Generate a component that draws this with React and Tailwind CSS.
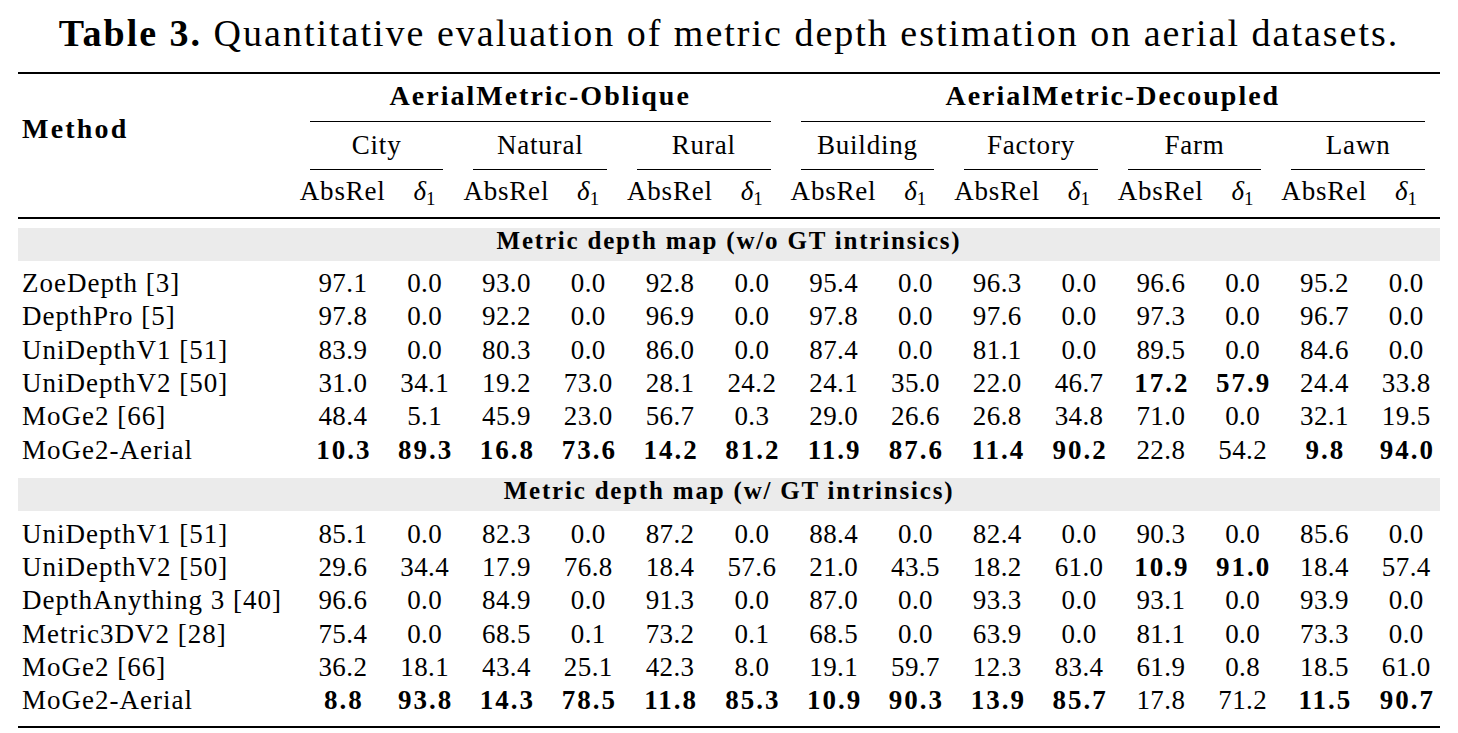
import React from "react";

const GRID = "grid grid-cols-[277px_repeat(7,95.8px_67.8px)]";

const block1 = [
  ["ZoeDepth [3]", "97.1 0.0 93.0 0.0 92.8 0.0 95.4 0.0 96.3 0.0 96.6 0.0 95.2 0.0"],
  ["DepthPro [5]", "97.8 0.0 92.2 0.0 96.9 0.0 97.8 0.0 97.6 0.0 97.3 0.0 96.7 0.0"],
  ["UniDepthV1 [51]", "83.9 0.0 80.3 0.0 86.0 0.0 87.4 0.0 81.1 0.0 89.5 0.0 84.6 0.0"],
  ["UniDepthV2 [50]", "31.0 34.1 19.2 73.0 28.1 24.2 24.1 35.0 22.0 46.7 *17.2 *57.9 24.4 33.8"],
  ["MoGe2 [66]", "48.4 5.1 45.9 23.0 56.7 0.3 29.0 26.6 26.8 34.8 71.0 0.0 32.1 19.5"],
  ["MoGe2-Aerial", "*10.3 *89.3 *16.8 *73.6 *14.2 *81.2 *11.9 *87.6 *11.4 *90.2 22.8 54.2 *9.8 *94.0"],
];

const block2 = [
  ["UniDepthV1 [51]", "85.1 0.0 82.3 0.0 87.2 0.0 88.4 0.0 82.4 0.0 90.3 0.0 85.6 0.0"],
  ["UniDepthV2 [50]", "29.6 34.4 17.9 76.8 18.4 57.6 21.0 43.5 18.2 61.0 *10.9 *91.0 18.4 57.4"],
  ["DepthAnything 3 [40]", "96.6 0.0 84.9 0.0 91.3 0.0 87.0 0.0 93.3 0.0 93.1 0.0 93.9 0.0"],
  ["Metric3DV2 [28]", "75.4 0.0 68.5 0.1 73.2 0.1 68.5 0.0 63.9 0.0 81.1 0.0 73.3 0.0"],
  ["MoGe2 [66]", "36.2 18.1 43.4 25.1 42.3 8.0 19.1 59.7 12.3 83.4 61.9 0.8 18.5 61.0"],
  ["MoGe2-Aerial", "*8.8 *93.8 *14.3 *78.5 *11.8 *85.3 *10.9 *90.3 *13.9 *85.7 17.8 71.2 *11.5 *90.7"],
];

const subsets = ["City", "Natural", "Rural", "Building", "Factory", "Farm", "Lawn"];

function Row({ name, values }) {
  return (
    <div className={`${GRID} h-[33.4px] text-[27px] leading-[33.4px]`}>
      <div className="pl-[4px] tracking-[1px] whitespace-nowrap">{name}</div>
      {values.split(" ").map((v, i) =>
        v.startsWith("*") ? (
          <div key={i} className="text-center font-bold tracking-[2px] pl-[2px]">
            {v.slice(1)}
          </div>
        ) : (
          <div key={i} className="text-center tracking-[0.4px]">
            {v}
          </div>
        )
      )}
    </div>
  );
}

function Band({ label }) {
  return (
    <div className="h-[33.3px] bg-[#ebebeb] pt-[0.5px] text-center font-bold text-[25px] leading-[25px] tracking-[1.8px]">
      {label}
    </div>
  );
}

export default function App() {
  return (
    <div className="w-[1458px] h-[733px] bg-white text-black font-[family-name:'Liberation_Serif',serif] overflow-hidden">
      <div className="pt-[14px] text-center text-[38px] leading-[38px] tracking-[2px] whitespace-nowrap">
        <span className="font-bold">Table 3.</span> Quantitative evaluation of metric depth estimation on aerial datasets.
      </div>
      <div className="ml-[18px] w-[1422px] mt-[20px]">
        <div className="h-[2.4px] bg-black" />
        <div className="flex">
          <div className="w-[277px] pl-[4px] pt-[41px] font-bold text-[28px] leading-[28px] tracking-[2.2px]">
            Method
          </div>
          <div className="w-[1145.2px]">
            <div className="flex">
              <div className="w-[490.8px]">
                <div className="pt-[7.2px] text-center font-bold text-[28px] leading-[28px] tracking-[2px]">
                  AerialMetric-Oblique
                </div>
                <div className="mx-[15px] mt-[11.4px] h-[1.2px] bg-black" />
              </div>
              <div className="w-[654.4px]">
                <div className="pt-[7.2px] text-center font-bold text-[28px] leading-[28px] tracking-[2px]">
                  AerialMetric-Decoupled
                </div>
                <div className="mx-[15px] mt-[11.4px] h-[1.2px] bg-black" />
              </div>
            </div>
            <div className="flex">
              {subsets.map((s) => (
                <div key={s} className="w-[163.6px]">
                  <div className="pt-[10.2px] text-center text-[27px] leading-[27px] tracking-[0.8px]">{s}</div>
                  <div className="mx-[15px] mt-[9.6px] h-[1.2px] bg-black" />
                </div>
              ))}
            </div>
            <div className="grid grid-cols-[repeat(7,95.8px_67.8px)] pt-[8.2px] pb-[11.3px] text-[27px] leading-[27px]">
              {subsets.map((s) => (
                <React.Fragment key={s}>
                  <div className="text-center tracking-[0.8px]">AbsRel</div>
                  <div className="text-center">
                    <span className="italic">δ</span>
                    <sub className="text-[19px]">1</sub>
                  </div>
                </React.Fragment>
              ))}
            </div>
          </div>
        </div>
        <div className="h-[2.4px] bg-black" />
        <div className="mt-[8.6px]">
          <Band label="Metric depth map (w/o GT intrinsics)" />
        </div>
        <div className="pt-[6px] pb-[10.6px]">
          {block1.map(([n, v]) => (
            <Row key={n} name={n} values={v} />
          ))}
        </div>
        <Band label="Metric depth map (w/ GT intrinsics)" />
        <div className="pt-[6.4px] pb-[7.9px]">
          {block2.map(([n, v]) => (
            <Row key={n} name={n} values={v} />
          ))}
        </div>
        <div className="h-[2.6px] bg-black" />
      </div>
    </div>
  );
}
